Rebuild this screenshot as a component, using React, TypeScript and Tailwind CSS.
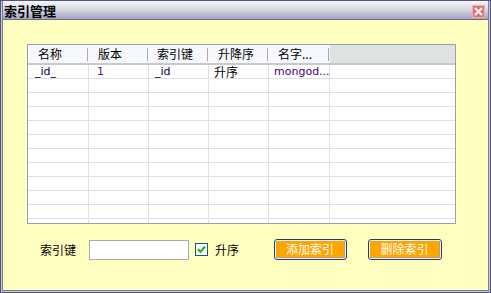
import React from "react";

const font = { fontFamily: '"Noto Sans CJK SC", "Liberation Sans", sans-serif' };
const latin = { fontFamily: '"DejaVu Sans", "Liberation Sans", sans-serif' };

const cols = [
  { w: 61, head: "名称", hp: 10, val: "_id_", vp: 7, color: "text-[#000040]", lat: true },
  { w: 60, head: "版本", hp: 9, val: "1", vp: 8, color: "text-[#800080]", lat: true },
  { w: 60, head: "索引键", hp: 8, val: "_id", vp: 6, color: "text-[#000040]", lat: true },
  { w: 60, head: "升降序", hp: 9, val: "升序", vp: 5, color: "text-black", lat: false },
  { w: 61, head: "名字...", hp: 9, val: "mongod...", vp: 5, color: "text-[#400080]", lat: true },
];

export default function App() {
  const rows = Array.from({ length: 12 }, (_, i) => i);
  return (
    <div
      className="w-[491px] h-[293px] flex flex-col overflow-hidden bg-[#ffffc0] border-[1px] border-[#55557a]"
      style={font}
    >
      <div className="flex flex-col flex-1 border-[1px] border-[#c8c8dc] border-t-0">
        <div className="flex flex-col flex-1 border-[1px] border-[#7c7c9c] border-t-0">
          {/* title bar */}
          <div className="h-[19px] flex items-center justify-between bg-gradient-to-b from-[#f6f6fb] via-[#d4d4e2] to-[#a4a4bc] border-b-[1px] border-[#6a6a8a]">
            <span className="pl-[1px] pt-[1px] text-[13px] font-bold text-black leading-none">索引管理</span>
            <div className="mr-[3px] mt-[2px] w-[13px] h-[13px] bg-[#e07474] border-[1px] border-[#f4b0b0] flex items-center justify-center">
              <svg width="9" height="9" viewBox="0 0 9 9">
                <path d="M1 1 L8 8 M8 1 L1 8" stroke="white" strokeWidth="2" />
              </svg>
            </div>
          </div>
          {/* body */}
          <div className="flex-1 flex flex-col pl-[24px] pt-[24px] bg-[#ffffc0]">
            {/* table */}
            <div className="w-[429px] h-[180px] border-[1px] border-[#8ea2ba] bg-white overflow-hidden flex flex-col">
              <div className="flex h-[20px] shrink-0 border-b-[2px] border-[#c6caca]">
                {cols.map((c, i) => (
                  <div
                    key={i}
                    className="relative h-[18px] bg-[#f7f8fd] flex items-center text-[12px] text-black leading-none"
                    style={{ width: c.w, paddingLeft: c.hp }}
                  >
                    {c.head}
                    <div className="absolute right-[1px] top-[3px] h-[13px] w-[1px] bg-[#a8a8a8]" />
                  </div>
                ))}
                <div className="flex-1 h-[18px] bg-[#e0e2e2]" />
              </div>
              <div className="flex flex-col">
                {rows.map((r) => (
                  <div key={r} className="flex h-[14px] shrink-0 border-b-[1px] border-[#e0e0e0]">
                    {cols.map((c, i) => (
                      <div
                        key={i}
                        className={`h-[13px] border-r-[1px] border-[#e0e0e0] whitespace-nowrap leading-[14px] ${c.lat ? "text-[11px]" : "text-[12px]"} ${c.color}`}
                        style={{ width: c.w, paddingLeft: c.vp, ...(c.lat ? latin : {}) }}
                      >
                        {r === 0 ? c.val : ""}
                      </div>
                    ))}
                    <div className="flex-1" />
                  </div>
                ))}
              </div>
            </div>
            {/* bottom controls */}
            <div className="flex items-center h-[21px] mt-[15px] text-[12px] text-black">
              <span className="ml-[13px] leading-none">索引键</span>
              <div className="ml-[13px] w-[100px] h-[20px] bg-white border-[1px] border-[#a2aabb]" />
              <div className="ml-[6px] w-[13px] h-[13px] bg-white border-[1px] border-[#1c5180] flex items-center justify-center">
                <svg width="9" height="9" viewBox="0 0 9 9">
                  <path d="M1 4 L3.5 7 L8 1.5" stroke="#22b022" strokeWidth="2" fill="none" />
                </svg>
              </div>
              <span className="ml-[7px] leading-none">升序</span>
              <button className="ml-[35px] w-[73px] h-[21px] rounded-[3px] border-[1px] border-[#1f3f6f] bg-[#f4f4f4] p-[1px] flex">
                <span className="flex-1 bg-[#ffa500] border-b-[1px] border-r-[1px] border-[#c0a070] text-white text-[12px] leading-none flex items-center justify-center">
                  添加索引
                </span>
              </button>
              <button className="ml-[21px] w-[74px] h-[21px] rounded-[3px] border-[1px] border-[#1f3f6f] bg-[#f4f4f4] p-[1px] flex">
                <span className="flex-1 bg-[#ffa500] border-b-[1px] border-r-[1px] border-[#c0a070] text-white text-[12px] leading-none flex items-center justify-center">
                  删除索引
                </span>
              </button>
            </div>
          </div>
        </div>
      </div>
    </div>
  );
}
